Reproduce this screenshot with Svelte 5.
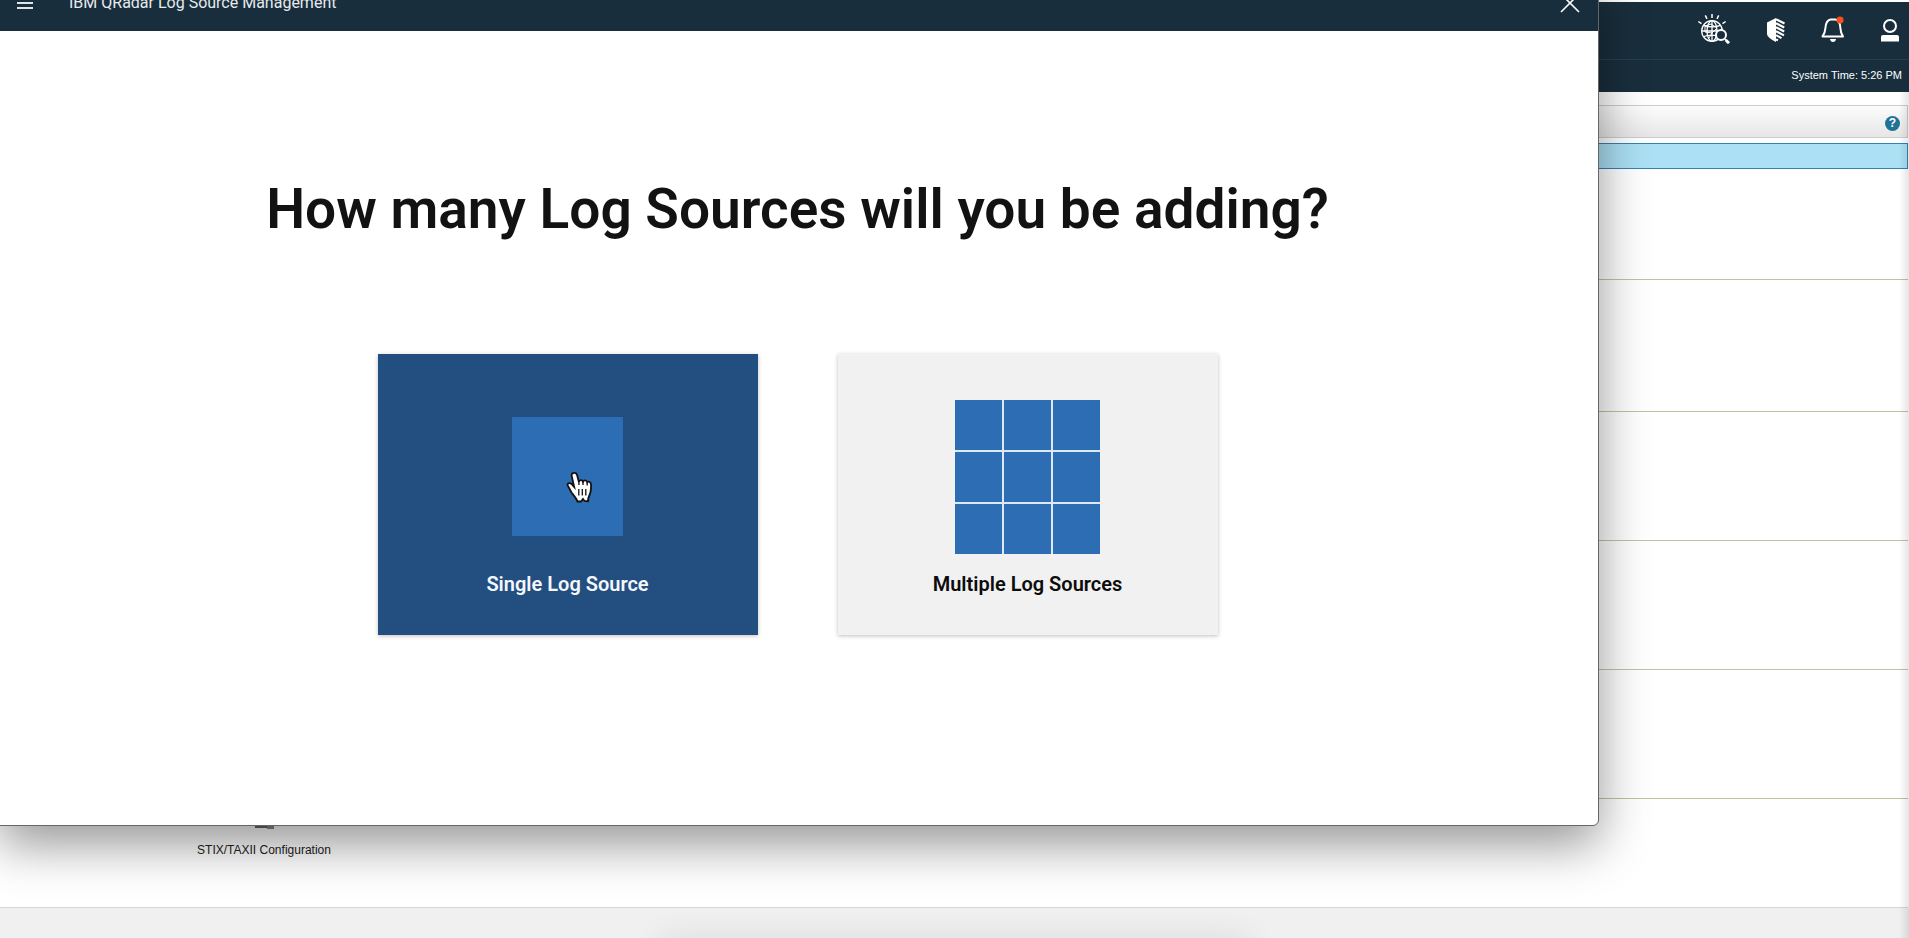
<script>
  const sections = ['intro', 'tall', 'regular', 'regular', 'regular'];
  const cells = Array.from({ length: 9 });
  let selected = $state('single');
</script>

<div class="desktop">
  <div class="console">
    <header class="masthead">
      <nav class="tools" aria-label="Console tools">
        <button class="tool globe" aria-label="Threat search">
          <svg width="34" height="34" viewBox="0 0 34 34" fill="none" stroke="#fff">
            <g stroke-width="1.3">
              <circle cx="15" cy="18" r="10.3" />
              <ellipse cx="15" cy="18" rx="5" ry="10.3" />
              <path d="M15 7.7v20.6M4.7 18h20.6M6.5 12.3q8.5 3 17 0M6.5 23.7q8.5-3 17 0" />
              <path d="M8 13l6-2 6 4-5 5-7-1zM15 20l-3 5" stroke-width="1" />
            </g>
            <path d="M15 1v4M8.3 2.4l1.7 3.4M21.7 2.4L20 5.8M1.3 8.5l3.2 2.2M28.7 8.5l-3.2 2.2" stroke-width="1.5" />
            <circle cx="24" cy="22" r="5" fill="#192e3c" stroke-width="2" />
            <path d="M27.8 26l1.8 1.8" stroke-width="1.5" />
            <path d="M28.8 27l3.2 3.2" stroke-width="3" />
          </svg>
        </button>
        <button class="tool shield" aria-label="Security">
          <svg width="18" height="24" viewBox="0 0 18 24">
            <path d="M9 0L0 4.5V16q0 3.5 9 8z" fill="#fff" />
            <path d="M9 1.2l8.5 4.3M9 5.2l8.2 4.3M9 9.2l8.2 4.3M9 13.2l8 4.2M9 17.2l5.5 3M9 21.5l2 .8" fill="none" stroke="#fff" stroke-width="2.1" />
          </svg>
        </button>
        <button class="tool bell" aria-label="Notifications">
          <svg width="24" height="28" viewBox="0 0 24 28">
            <path d="M1.500 20.500h20.500q-2.500-4-2.700-9Q19 4.500 14.500 3.500H9.500Q5 4.500 4.500 11.500 4.200 16.500 1.500 20.500z" fill="none" stroke="#fff" stroke-width="2" stroke-linejoin="round" />
            <path d="M9 23h6q-.5 3-3 3t-3-3z" fill="#fff" />
            <circle cx="19" cy="4" r="3.600" fill="#fa4d1c" />
          </svg>
        </button>
        <button class="tool user" aria-label="User menu">
          <svg width="18" height="24" viewBox="0 0 18 24">
            <circle cx="9" cy="8" r="6" fill="none" stroke="#fff" stroke-width="2" />
            <path d="M0 23.500V19q0-2 2-2h14q2 0 2 2v4.500z" fill="#fff" />
          </svg>
        </button>
      </nav>
      <p class="clock">System Time: 5:26 PM</p>
    </header>

    <main class="workspace">
      <div class="toolbar">
        <button class="help" aria-label="Help">?</button>
      </div>
      <div class="banner"></div>
      {#each sections as size}
        <section class="group {size}"></section>
      {/each}
      <section class="group last">
        <a class="tile" href="#stix">
          <svg width="22" height="24" viewBox="0 0 22 24">
            <path d="M2 4h12v19H2z" fill="#666" />
            <path d="M14 12h7v12h-7z" fill="#888" />
          </svg>
          STIX/TAXII Configuration
        </a>
      </section>
    </main>
    <footer class="statusbar"><div class="dock"></div></footer>
    <div class="edge"></div>
  </div>

  <div class="window" role="dialog" aria-labelledby="question">
    <header class="titlebar">
      <button class="icon" aria-label="Menu">
        <svg width="18" height="16" viewBox="0 0 18 16" stroke="#dfe5e8" stroke-width="2">
          <path d="M1 3h16M1 8h16M1 13h16" />
        </svg>
      </button>
      <span class="product">IBM QRadar Log Source Management</span>
      <button class="icon" aria-label="Close">
        <svg width="20" height="20" viewBox="0 0 20 20" stroke="#fff" stroke-width="1.6">
          <path d="M1 1l18 18M19 1L1 19" />
        </svg>
      </button>
    </header>
    <div class="body">
      <h1 id="question">How many Log Sources will you be adding?</h1>
      <div class="choices">
        <button class="choice" class:selected={selected === 'single'} onclick={() => (selected = 'single')}>
          <span class="art"><span class="one"></span></span>
          Single Log Source
        </button>
        <button class="choice" class:selected={selected === 'multiple'} onclick={() => (selected = 'multiple')}>
          <span class="art">
            <span class="many">
              {#each cells as _}<span class="cell"></span>{/each}
            </span>
          </span>
          Multiple Log Sources
        </button>
      </div>
    </div>
  </div>

  <svg class="pointer" width="28" height="34" viewBox="0 0 28 34" aria-hidden="true">
    <path d="M7.500 2C9.500 1.300 10.700 2.500 11.200 4.500L12.900 11C13.500 8.500 16.300 8.600 17 10.600C18 8.800 20.500 9 21.200 11.200C22.800 10 25 11 25 13.500C25.200 18 25.200 20.500 23.500 24C22.500 26 22 27.500 22 30.300L18.500 30L17 28L15 30.500H11.500C10.500 27.500 7.500 24 5.500 21.500C4 19 3 16.500 1.700 14.500C.8 12.500 3.500 11.200 5.500 13L8.200 16L5.700 5C5.300 3.500 6 2.300 7.500 2Z" fill="#fff" stroke="#111" stroke-width="1.800" />
    <path d="M12.800 18v6.500M16.300 18v6.500M19.800 18v6.500M12.900 11v3M17 11v3M21.200 12v2.500" fill="none" stroke="#111" stroke-width="1.300" />
  </svg>
</div>

<style>
  :global(body) {
    margin: 0;
  }
  .desktop {
    position: relative;
    min-height: 100vh;
    overflow: hidden;
    font-family: 'Liberation Sans', Arial, sans-serif;
    background: #fff;
  }
  button {
    padding: 0;
    border: 0;
    background: none;
    font: inherit;
    color: inherit;
    cursor: pointer;
  }
  svg {
    display: block;
  }
  .console {
    position: relative;
    display: flex;
    flex-direction: column;
    min-height: 100vh;
  }
  .masthead {
    margin-top: 2px;
    color: #fff;
    background: #192e3c;
  }
  .tools {
    display: flex;
    align-items: center;
    justify-content: flex-end;
    gap: 36px;
    height: 55px;
    padding: 0 10px 2px 0;
    border-bottom: 1px solid #21414e;
  }
  .clock {
    margin: 0;
    padding: 0 7px 2px 0;
    font-size: 11px;
    line-height: 30px;
    text-align: right;
  }
  .workspace {
    padding: 13px 1px 0 0;
  }
  .toolbar {
    display: flex;
    align-items: center;
    justify-content: flex-end;
    height: 31px;
    padding: 0 7px;
    border: 1px solid #ccc;
    background: linear-gradient(#fcfcfc, #e6e6e6);
  }
  .help {
    width: 15px;
    height: 15px;
    margin-top: 4px;
    border-radius: 50%;
    color: #fff;
    background: #1f7396;
    font-size: 12px;
    font-weight: 700;
    line-height: 15px;
  }
  .banner {
    height: 24px;
    margin-top: 5px;
    border: 1px solid #3282b8;
    background: #ace0f4;
  }
  .group {
    border-bottom: 1px solid #bfc49c;
  }
  .intro {
    height: 110px;
  }
  .tall {
    height: 131px;
  }
  .regular {
    height: 128px;
  }
  .last {
    display: flex;
    height: 108px;
    padding-left: 164px;
    border-color: #d6d6d6;
  }
  .tile {
    display: flex;
    flex-direction: column;
    align-items: center;
    width: 200px;
    padding-top: 6px;
    gap: 13px;
    color: #222;
    font-size: 12px;
    line-height: 16px;
    text-decoration: none;
  }
  .statusbar {
    flex: 1;
    display: flex;
    align-items: flex-end;
    justify-content: center;
    overflow: hidden;
    background: #f0f0f0;
  }
  .dock {
    width: 30%;
    height: 1px;
    margin-bottom: -8px;
    box-shadow: 0 0 30px 8px rgba(0, 0, 0, 0.1);
  }
  .edge {
    position: absolute;
    top: 92px;
    right: 0;
    bottom: 0;
    width: 10px;
    background: linear-gradient(90deg, transparent, rgba(0, 0, 0, 0.1));
  }
  .window {
    position: absolute;
    top: -27px;
    left: -1px;
    right: 310px;
    box-sizing: border-box;
    border: 1px solid #666;
    border-radius: 0 0 6px 0;
    overflow: hidden;
    background: #fff;
    box-shadow: 0 18px 50px rgba(0, 0, 0, 0.42);
    font-family: 'Roboto', sans-serif;
  }
  .titlebar {
    display: flex;
    align-items: center;
    height: 57px;
    padding: 0 18px 0 16px;
    color: #e6ebee;
    background: #192e3c;
  }
  .product {
    flex: 1;
    padding-left: 35px;
    font-size: 16px;
    line-height: 24px;
  }
  .body {
    padding: 142px 3px 190px 0;
  }
  h1 {
    margin: 0;
    color: #121212;
    font-size: 55px;
    font-weight: 600;
    line-height: 72px;
    text-align: center;
  }
  .choices {
    display: flex;
    justify-content: center;
    gap: 80px;
    margin-top: 109px;
  }
  .choice {
    display: flex;
    flex-direction: column;
    align-items: center;
    width: 380px;
    height: 281px;
    padding-top: 45px;
    color: #0c0c0c;
    background: #f1f1f1;
    box-shadow: 0 1px 4px rgba(0, 0, 0, 0.25);
    font-size: 20px;
    font-weight: 600;
    line-height: 28px;
  }
  .choice.selected {
    color: #f4f7fb;
    background: #224e80;
  }
  .art {
    display: flex;
    align-items: center;
    justify-content: center;
    height: 155px;
    margin-bottom: 16px;
  }
  .one {
    width: 111px;
    height: 119px;
    background: #2d6db3;
  }
  .many {
    display: grid;
    grid-template-columns: repeat(3, 47px);
    grid-auto-rows: 50px;
    gap: 2px;
    background: #dce9f6;
  }
  .cell {
    background: #2d6db3;
  }
  .pointer {
    position: absolute;
    top: 471px;
    left: 566px;
  }
</style>
